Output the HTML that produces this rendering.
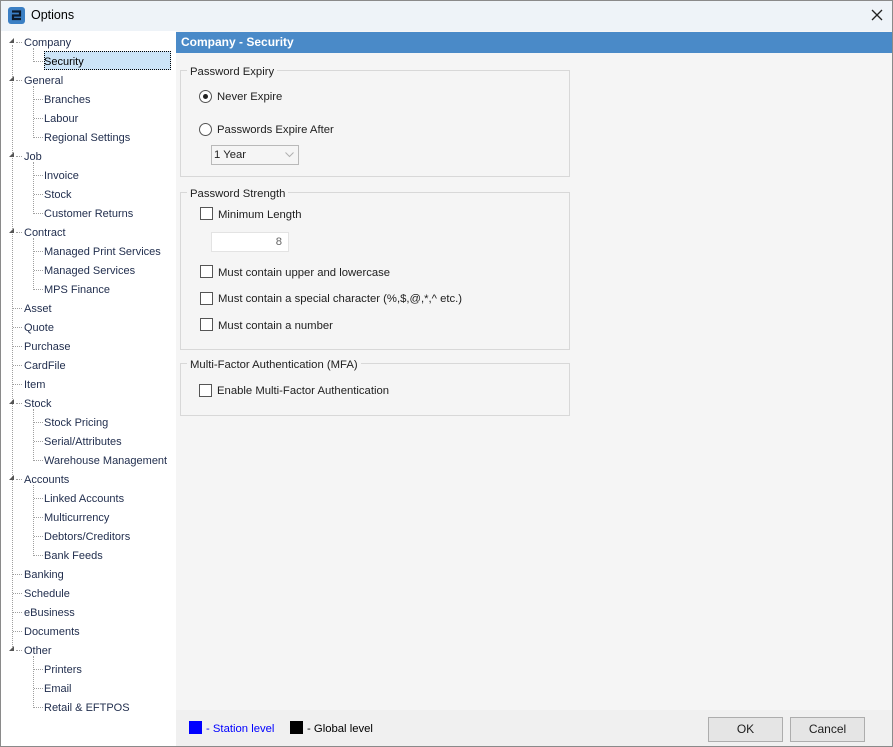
<!DOCTYPE html>
<html><head><meta charset="utf-8"><style>
*{margin:0;padding:0;box-sizing:border-box}
body{width:893px;height:747px;overflow:hidden;background:#fff;font-family:"Liberation Sans",sans-serif;font-size:11.3px;color:#1e1e1e;position:relative}
.a{position:absolute}
#win{left:0;top:0;width:893px;height:747px;border:1px solid #8a8a8a}
#title{left:1px;top:1px;width:891px;height:30px;background:#eef3f8}
#left{left:1px;top:31px;width:175px;height:715px;background:#fff}
#right{left:176px;top:31px;width:716px;height:715px;background:#f5f5f5}
#hdr{left:176px;top:32px;width:716px;height:21px;background:#4a8ac8;color:#fff;font-weight:bold;font-size:12px;line-height:21px;padding-left:5px}
#foot{left:176px;top:710px;width:716px;height:36px;background:#f0f0f0}
.t{position:absolute;height:18px;line-height:18px;color:#1f2c4c;white-space:nowrap;margin-top:1px;font-size:11px}
.p{left:24px}.c{left:44px}
.vl{position:absolute;border-left:1px dotted #a0a0a0;width:0}
.hl{position:absolute;border-top:1px dotted #a0a0a0;height:0}
.tri{position:absolute;width:0;height:0;border-left:5px solid transparent;border-bottom:5px solid #555;}
fieldset{position:absolute;border:1px solid #d8d8d8;}
.lg{position:absolute;background:#f5f5f5;padding:0 3px;line-height:14px;color:#1e1e1e}
.rb{position:absolute;width:13px;height:13px;border:1px solid #555;border-radius:50%;background:#fff}
.cb{position:absolute;width:13px;height:13px;border:1px solid #555;background:#fff}
.lb{position:absolute;line-height:14px;white-space:nowrap;margin-top:1px}
.btn{position:absolute;top:717px;width:75px;height:25px;border:1px solid #adadad;background:#e5e5e5;text-align:center;line-height:23px;font-size:12px}
</style></head><body>
<div id="win" class="a"></div>
<div id="title" class="a"></div>
<svg class="a" style="left:8px;top:7px" width="17" height="17" viewBox="0 0 17 17"><rect x="0" y="0" width="17" height="17" rx="3" fill="#3b7fc4"/><path d="M4 4.5h8v4H5v3.5h8" fill="none" stroke="#0c1a2a" stroke-width="2.2"/></svg>
<div class="a" style="left:31px;top:8px;font-size:12.5px;color:#000">Options</div>
<svg class="a" style="left:871px;top:9px" width="12" height="12" viewBox="0 0 12 12"><path d="M1 1L11 11M11 1L1 11" stroke="#222" stroke-width="1.3"/></svg>
<div id="left" class="a"></div>
<div id="right" class="a"></div>
<div id="hdr" class="a">Company - Security</div>
<div id="foot" class="a"></div>

<div class="vl" style="left:12px;top:45px;height:606px"></div>
<div class="vl" style="left:33px;top:48px;height:14px"></div>
<div class="vl" style="left:33px;top:86px;height:52px"></div>
<div class="vl" style="left:33px;top:162px;height:52px"></div>
<div class="vl" style="left:33px;top:238px;height:52px"></div>
<div class="vl" style="left:33px;top:409px;height:52px"></div>
<div class="vl" style="left:33px;top:485px;height:71px"></div>
<div class="vl" style="left:33px;top:656px;height:52px"></div>

<div class="hl" style="left:16px;top:42px;width:6px"></div><div class="tri" style="left:9px;top:38px"></div><div class="t p" style="top:33px">Company</div>
<div class="hl" style="left:34px;top:61px;width:9px"></div>
<div class="a" style="left:44px;top:51px;width:127px;height:19px;background:#cce4f7;border:1px dotted #000"></div><div class="t c" style="top:52px;color:#000">Security</div>
<div class="hl" style="left:16px;top:80px;width:6px"></div><div class="tri" style="left:9px;top:76px"></div><div class="t p" style="top:71px">General</div>
<div class="hl" style="left:34px;top:99px;width:9px"></div><div class="t c" style="top:90px">Branches</div>
<div class="hl" style="left:34px;top:118px;width:9px"></div><div class="t c" style="top:109px">Labour</div>
<div class="hl" style="left:34px;top:137px;width:9px"></div><div class="t c" style="top:128px">Regional Settings</div>
<div class="hl" style="left:16px;top:156px;width:6px"></div><div class="tri" style="left:9px;top:152px"></div><div class="t p" style="top:147px">Job</div>
<div class="hl" style="left:34px;top:175px;width:9px"></div><div class="t c" style="top:166px">Invoice</div>
<div class="hl" style="left:34px;top:194px;width:9px"></div><div class="t c" style="top:185px">Stock</div>
<div class="hl" style="left:34px;top:213px;width:9px"></div><div class="t c" style="top:204px">Customer Returns</div>
<div class="hl" style="left:16px;top:232px;width:6px"></div><div class="tri" style="left:9px;top:228px"></div><div class="t p" style="top:223px">Contract</div>
<div class="hl" style="left:34px;top:251px;width:9px"></div><div class="t c" style="top:242px">Managed Print Services</div>
<div class="hl" style="left:34px;top:270px;width:9px"></div><div class="t c" style="top:261px">Managed Services</div>
<div class="hl" style="left:34px;top:289px;width:9px"></div><div class="t c" style="top:280px">MPS Finance</div>
<div class="hl" style="left:13px;top:308px;width:9px"></div><div class="t p" style="top:299px">Asset</div>
<div class="hl" style="left:13px;top:327px;width:9px"></div><div class="t p" style="top:318px">Quote</div>
<div class="hl" style="left:13px;top:346px;width:9px"></div><div class="t p" style="top:337px">Purchase</div>
<div class="hl" style="left:13px;top:365px;width:9px"></div><div class="t p" style="top:356px">CardFile</div>
<div class="hl" style="left:13px;top:384px;width:9px"></div><div class="t p" style="top:375px">Item</div>
<div class="hl" style="left:16px;top:403px;width:6px"></div><div class="tri" style="left:9px;top:399px"></div><div class="t p" style="top:394px">Stock</div>
<div class="hl" style="left:34px;top:422px;width:9px"></div><div class="t c" style="top:413px">Stock Pricing</div>
<div class="hl" style="left:34px;top:441px;width:9px"></div><div class="t c" style="top:432px">Serial/Attributes</div>
<div class="hl" style="left:34px;top:460px;width:9px"></div><div class="t c" style="top:451px">Warehouse Management</div>
<div class="hl" style="left:16px;top:479px;width:6px"></div><div class="tri" style="left:9px;top:475px"></div><div class="t p" style="top:470px">Accounts</div>
<div class="hl" style="left:34px;top:498px;width:9px"></div><div class="t c" style="top:489px">Linked Accounts</div>
<div class="hl" style="left:34px;top:517px;width:9px"></div><div class="t c" style="top:508px">Multicurrency</div>
<div class="hl" style="left:34px;top:536px;width:9px"></div><div class="t c" style="top:527px">Debtors/Creditors</div>
<div class="hl" style="left:34px;top:555px;width:9px"></div><div class="t c" style="top:546px">Bank Feeds</div>
<div class="hl" style="left:13px;top:574px;width:9px"></div><div class="t p" style="top:565px">Banking</div>
<div class="hl" style="left:13px;top:593px;width:9px"></div><div class="t p" style="top:584px">Schedule</div>
<div class="hl" style="left:13px;top:612px;width:9px"></div><div class="t p" style="top:603px">eBusiness</div>
<div class="hl" style="left:13px;top:631px;width:9px"></div><div class="t p" style="top:622px">Documents</div>
<div class="hl" style="left:16px;top:650px;width:6px"></div><div class="tri" style="left:9px;top:646px"></div><div class="t p" style="top:641px">Other</div>
<div class="hl" style="left:34px;top:669px;width:9px"></div><div class="t c" style="top:660px">Printers</div>
<div class="hl" style="left:34px;top:688px;width:9px"></div><div class="t c" style="top:679px">Email</div>
<div class="hl" style="left:34px;top:707px;width:9px"></div><div class="t c" style="top:698px">Retail &amp; EFTPOS</div>

<fieldset style="left:180px;top:70px;width:390px;height:107px"></fieldset>
<div class="lg" style="left:187px;top:65px">Password Expiry</div>
<div class="rb" style="left:199px;top:90px"></div><div class="a" style="left:203px;top:94px;width:5px;height:5px;border-radius:50%;background:#222"></div>
<div class="lb" style="left:217px;top:89px">Never Expire</div>
<div class="rb" style="left:199px;top:123px"></div>
<div class="lb" style="left:217px;top:122px">Passwords Expire After</div>
<div class="a" style="left:211px;top:145px;width:88px;height:20px;border:1px solid #b9b9b9;background:#f5f5f5;line-height:19px;padding-left:2px">1 Year</div>
<svg class="a" style="left:285px;top:152px" width="9" height="6" viewBox="0 0 9 6"><path d="M0.5 0.5L4.5 4.5L8.5 0.5" fill="none" stroke="#b0b0b0"/></svg>

<fieldset style="left:180px;top:192px;width:390px;height:158px"></fieldset>
<div class="lg" style="left:187px;top:187px">Password Strength</div>
<div class="cb" style="left:200px;top:207px"></div><div class="lb" style="left:218px;top:207px">Minimum Length</div>
<div class="a" style="left:211px;top:232px;width:78px;height:20px;border:1px solid #e3e3e3;background:#fff;text-align:right;padding-right:6px;line-height:19px;color:#666">8</div>
<div class="cb" style="left:200px;top:265px"></div><div class="lb" style="left:218px;top:265px">Must contain upper and lowercase</div>
<div class="cb" style="left:200px;top:292px"></div><div class="lb" style="left:218px;top:291px">Must contain a special character (%,$,@,*,^ etc.)</div>
<div class="cb" style="left:200px;top:318px"></div><div class="lb" style="left:218px;top:318px">Must contain a number</div>

<fieldset style="left:180px;top:363px;width:390px;height:53px"></fieldset>
<div class="lg" style="left:187px;top:358px">Multi-Factor Authentication (MFA)</div>
<div class="cb" style="left:199px;top:384px"></div><div class="lb" style="left:217px;top:383px">Enable Multi-Factor Authentication</div>

<div class="a" style="left:189px;top:721px;width:13px;height:13px;background:#0000ff"></div>
<div class="lb" style="left:206px;top:721px;color:#0000ff">- Station level</div>
<div class="a" style="left:290px;top:721px;width:13px;height:13px;background:#000"></div>
<div class="lb" style="left:307px;top:721px;color:#000">- Global level</div>
<div class="btn" style="left:708px">OK</div>
<div class="btn" style="left:790px">Cancel</div>
</body></html>
